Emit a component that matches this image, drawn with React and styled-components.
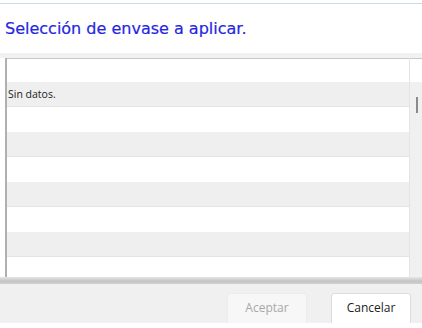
import React from "react";
import styled, { createGlobalStyle } from "styled-components";

const GlobalStyle = createGlobalStyle`
    html, body {
        margin: 0;
        padding: 0;
        background: #ffffff;
        overflow: hidden;
    }
`;

const Page = styled.div`
    width: 422px;
    height: 328px;
    display: flex;
    flex-direction: column;
    font-family: "Open Sans", "DejaVu Sans", sans-serif;
    overflow: hidden;
`;

const TopLine = styled.div`
    margin-top: 3px;
    height: 1px;
    background: #c9dbef;
`;

const Title = styled.h2`
    margin: 0;
    height: 49px;
    padding: 15px 0 0 5px;
    box-sizing: border-box;
    font-family: "DejaVu Sans", sans-serif;
    font-size: 16px;
    font-weight: normal;
    -webkit-text-stroke: 0.2px #2626e2;
    color: #2626e2;
`;

const Panel = styled.div`
    display: flex;
    flex-direction: column;
    background: #f1f1f1;
    padding-top: 5px;
`;

const Grid = styled.div`
    display: grid;
    grid-template-columns: 5px 2px 1fr 1px 12px;
    background: #ffffff;
`;

const Gutter = styled.div`
    background: #ffffff;
`;

const LeftBorder = styled.div`
    background: #b0b0b0;
`;

const Divider = styled.div`
    background: #e4e4e4;
`;

const HeaderRow = styled.div`
    height: 24px;
    border-top: 1px solid #c8c8c8;
    box-sizing: border-box;
    background: #ffffff;
`;

const Body = styled.div`
    display: flex;
    flex-direction: column;
    height: 195px;
    overflow: hidden;
`;

const Row = styled.div`
    height: 25px;
    flex-shrink: 0;
    box-sizing: border-box;
    display: flex;
    align-items: center;
    padding-left: 1px;
    font-size: 10.5px;
    color: #222222;
    background: ${({ $alt }) => ($alt ? "#efefef" : "#ffffff")};
    border-bottom: 1px solid ${({ $alt }) => ($alt ? "#e4e4e4" : "#ffffff")};
`;

const Track = styled.div`
    background: #f0f0f0;
    position: relative;
`;

const Thumb = styled.div`
    position: absolute;
    left: 6px;
    top: 15px;
    width: 2px;
    height: 16px;
    background: #8a8a8a;
`;

const Separator = styled.div`
    height: 7px;
    background: linear-gradient(#e6e6e6, #c4c4c4 60%, #d0d0d0);
`;

const Footer = styled.div`
    height: 39px;
    background: #f0f0f0;
    display: flex;
    justify-content: flex-end;
    align-items: flex-start;
    gap: 24px;
    padding: 9px 11px 0 0;
    box-sizing: border-box;
    overflow: hidden;
`;

const Button = styled.button`
    width: 80px;
    height: 32px;
    flex-shrink: 0;
    background: ${({ disabled }) => (disabled ? "#f7f7f7" : "#ffffff")};
    border: 1px solid ${({ disabled }) => (disabled ? "#ececec" : "#dcdcdc")};
    border-radius: 3px;
    font-family: "Open Sans", sans-serif;
    font-size: 12px;
    color: ${({ disabled }) => (disabled ? "#a8a8a8" : "#222222")};
    padding: 0 0 4px 0;
`;

const rows = ["Sin datos.", "", "", "", "", "", "", ""];

export default function App() {
    return (
        <Page>
            <GlobalStyle />
            <TopLine />
            <Title>Selección de envase a aplicar.</Title>
            <Panel>
                <Grid>
                    <Gutter />
                    <LeftBorder />
                    <HeaderRow />
                    <Divider />
                    <HeaderRow />
                    <Gutter />
                    <LeftBorder />
                    <Body>
                        {rows.map((text, index) => (
                            <Row key={index} $alt={index % 2 === 0}>
                                {text}
                            </Row>
                        ))}
                    </Body>
                    <Divider />
                    <Track>
                        <Thumb />
                    </Track>
                </Grid>
                <Separator />
                <Footer>
                    <Button disabled>Aceptar</Button>
                    <Button>Cancelar</Button>
                </Footer>
            </Panel>
        </Page>
    );
}
